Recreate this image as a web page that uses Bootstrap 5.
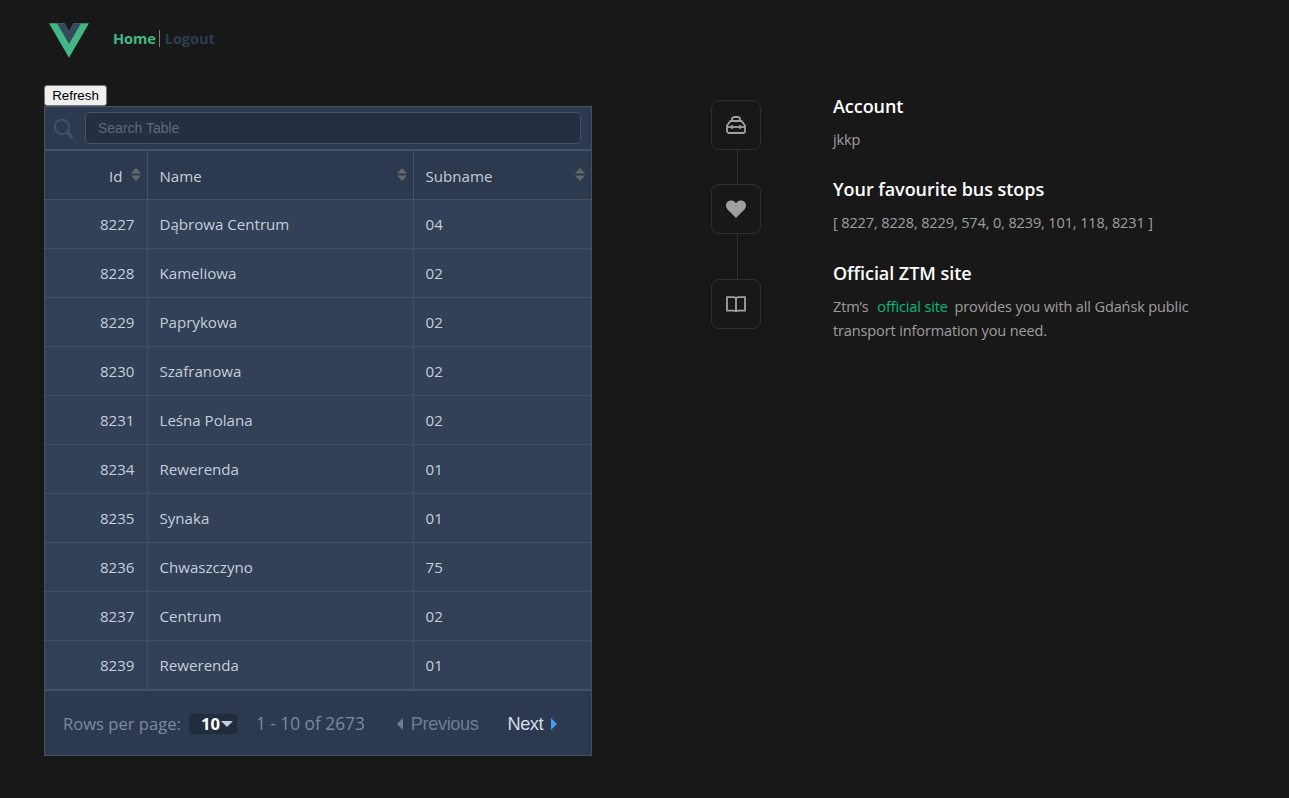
<!DOCTYPE html>
<html lang="en">
<head>
<meta charset="utf-8">
<title>Home</title>
<link rel="stylesheet" href="https://cdn.jsdelivr.net/npm/bootstrap@5.3.0/dist/css/bootstrap.min.css">
<style>
html,body{height:100%}
body{background:#181818;color:rgba(235,235,235,.64);font-family:"Open Sans","Noto Sans",sans-serif;font-size:14.5px;line-height:24px;overflow:hidden}
.app-shell{padding:0 44px;height:798px}
.left-pane{width:548px;flex:none}
.top-bar{height:85px;padding:23px 0 0 5px}
.top-nav{margin-left:24px;margin-top:5px;font-family:"Open Sans","Noto Sans",sans-serif;font-weight:700;font-size:14.6px;line-height:20px;letter-spacing:-.1px}
.top-nav a{text-decoration:none;padding:0 4px;display:inline-block;line-height:17px}
.top-nav .on{color:#42b883;padding-right:3px;padding-left:0}
.top-nav .off{color:#2c3e50;border-left:1.5px solid #6f8294;padding-left:5px}
.refresh-btn{display:block;font:13.33px/15px "Liberation Sans",Arial,sans-serif;height:21px;width:63px;padding:0;background:#efefef;border:1px solid #767676;border-radius:3px;color:#000}
.grid-box{border:1px solid #435169;background:#2c394f}
.search-row{height:44px;padding:5px 10px 0 8px;gap:10px;border-bottom:2px solid #435169;align-items:flex-start}
.search-field{flex:1;height:32px;background:#262e42;border:1px solid #435169;border-radius:4px;padding:0 12px;font-family:"Liberation Sans",Arial,sans-serif;font-size:14px;line-height:30px;color:#5b6a81}
.search-ico{margin-top:6px}
.stop-table{width:100%;margin:0;table-layout:fixed;border-collapse:collapse;font-size:15.1px}
.stop-table th,.stop-table td{height:49px;padding:1px 12px 0;vertical-align:middle;border:0;border-bottom:1px solid #435169;border-right:1px solid #435169;color:#c7ced8;background:#324058;box-shadow:none;font-weight:400;line-height:20px}
.stop-table th{height:48px;padding-top:2px;background:#2c394f;position:relative}
.stop-table th:last-child,.stop-table td:last-child{border-right:0}
.col-id{width:102px;text-align:right}
.col-name{width:266px}
.stop-table th.col-id{padding-right:24px}
.sorter{position:absolute;right:6px;top:17px;width:10px;height:13px}
.pager{height:66px;border-top:2px solid #435169;background:#2c394f;padding:2px 0 0 18px;font-size:16.6px;color:#7a8aa3;margin-top:-1px}
.pager-range{font-size:17.3px}
.per-page{background:#222c3f;border-radius:3px;height:20px;width:48px;margin:0 19px 0 8px;padding-left:12px;color:#fff;font-weight:700;line-height:20px;gap:1px}
.page-link-a{font-family:"Liberation Sans",Arial,sans-serif;font-size:18.2px;letter-spacing:-.4px;text-decoration:none}
.page-link-a.dim{color:#6f7d90;margin-left:32px}
.page-link-a.act{color:#d5dde8;margin-left:29px}
.rail{width:50px;margin:100px 72px 0 119px;flex:none}
.rail-box{width:50px;height:50px;border:1px solid #2f2f2f;border-radius:8px}
.rail-line{width:1px;background:#2f2f2f;margin-left:26px}
.info-pane{width:370px;margin-top:94px;flex:none}
.info-block h3{font-family:"Open Sans","Noto Sans",sans-serif;font-size:18px;font-weight:600;color:#fff;line-height:25px;margin:0 0 9px;letter-spacing:-.05px}
.info-block p{margin:0;font-size:14.5px;letter-spacing:-.12px}
.info-block a{color:#00bd7e;text-decoration:none;padding:0 3px;margin-left:2px}
.b1{height:83px}.b2{height:84px}
</style>
</head>
<body>
<div class="app-shell d-flex">
  <div class="left-pane">
    <div class="top-bar d-flex align-items-start">
      <svg width="40" height="35" viewBox="0 0 261.76 226.69"><path fill="#41b883" d="M161.096.001l-30.225 52.351L100.647.001H-.005l130.877 226.688L261.749.001z"/><path fill="#34495e" d="M161.096.001l-30.225 52.351L100.647.001H52.346l78.526 136.01L209.398.001z"/></svg>
      <nav class="top-nav"><a class="on" href="#">Home</a><a class="off" href="#">Logout</a></nav>
    </div>
    <button class="refresh-btn" type="button">Refresh</button>
    <div class="grid-box">
      <div class="search-row d-flex">
        <svg class="search-ico" width="22" height="22" viewBox="0 0 22 22" fill="none"><circle cx="9" cy="9" r="7.2" stroke="#435169" stroke-width="2"/><path d="M14.5 14.5l5 5" stroke="#435169" stroke-width="3.4"/></svg>
        <div class="search-field">Search Table</div>
      </div>
      <table class="table stop-table">
        <thead>
          <tr>
            <th class="col-id">Id<svg class="sorter" viewBox="0 0 10 13"><path fill="#666" d="M5 0l5 5.5H0zM5 13L0 7.5h10z"/></svg></th>
            <th class="col-name">Name<svg class="sorter" viewBox="0 0 10 13"><path fill="#666" d="M5 0l5 5.5H0zM5 13L0 7.5h10z"/></svg></th>
            <th>Subname<svg class="sorter" viewBox="0 0 10 13"><path fill="#666" d="M5 0l5 5.5H0zM5 13L0 7.5h10z"/></svg></th>
          </tr>
        </thead>
        <tbody>
          <tr><td class="col-id">8227</td><td>Dąbrowa Centrum</td><td>04</td></tr>
          <tr><td class="col-id">8228</td><td>Kameliowa</td><td>02</td></tr>
          <tr><td class="col-id">8229</td><td>Paprykowa</td><td>02</td></tr>
          <tr><td class="col-id">8230</td><td>Szafranowa</td><td>02</td></tr>
          <tr><td class="col-id">8231</td><td>Leśna Polana</td><td>02</td></tr>
          <tr><td class="col-id">8234</td><td>Rewerenda</td><td>01</td></tr>
          <tr><td class="col-id">8235</td><td>Synaka</td><td>01</td></tr>
          <tr><td class="col-id">8236</td><td>Chwaszczyno</td><td>75</td></tr>
          <tr><td class="col-id">8237</td><td>Centrum</td><td>02</td></tr>
          <tr><td class="col-id">8239</td><td>Rewerenda</td><td>01</td></tr>
        </tbody>
      </table>
      <div class="pager d-flex align-items-center">
        <span>Rows per page:</span>
        <span class="per-page d-flex align-items-center">10<svg width="12" height="6" viewBox="0 0 12 6"><path fill="#c7ced8" d="M0 0h12L6 6z"/></svg></span>
        <span class="pager-range">1 - 10 of 2673</span>
        <a class="page-link-a dim d-flex align-items-center gap-2" href="#"><svg width="6" height="12" viewBox="0 0 6 12"><path fill="#6f7d90" d="M6 0v12L0 6z"/></svg>Previous</a>
        <a class="page-link-a act d-flex align-items-center gap-2" href="#">Next<svg width="6" height="12" viewBox="0 0 6 12"><path fill="#409eff" d="M0 0v12l6-6z"/></svg></a>
      </div>
    </div>
  </div>
  <div class="rail">
    <div class="rail-box d-flex align-items-center justify-content-center">
      <svg width="20" height="18" viewBox="0 0 20 18" fill="none" stroke="#a0a0a0" stroke-width="1.8"><path d="M6 5.500V3.500C6 2 7 1 8.500 1h3C13 1 14 2 14 3.500v2"/><path d="M4.500 5h11l3.500 4.500V15a2 2 0 0 1-2 2H3a2 2 0 0 1-2-2V9.500z"/><path d="M1 11h18"/><path d="M6 9v4M14 9v4" stroke-width="1.600"/></svg>
    </div>
    <div class="rail-line" style="height:34px"></div>
    <div class="rail-box d-flex align-items-center justify-content-center">
      <svg width="20" height="18" viewBox="0 0 20 18"><path fill="#a0a0a0" d="M10 18L1.6 9.4C-.5 7.200-.5 3.900 1.400 1.900 3.400-.1 6.600-.1 8.600 1.800L10 3.200l1.400-1.400c2-1.900 5.200-1.900 7.200.1 1.900 2 1.900 5.300-.2 7.500z"/></svg>
    </div>
    <div class="rail-line" style="height:45px"></div>
    <div class="rail-box d-flex align-items-center justify-content-center">
      <svg width="20" height="17" viewBox="0 0 20 17" fill="none" stroke="#a0a0a0" stroke-width="1.800"><path d="M1 1.200h6.500c1.300 0 2.500.6 2.500 1.800 0-1.200 1.200-1.800 2.500-1.800H19v13.400h-6.500c-1.300 0-2.500.5-2.500 1.400 0-.9-1.200-1.400-2.500-1.400H1z"/><path d="M10 3v13"/></svg>
    </div>
  </div>
  <div class="info-pane">
    <div class="info-block b1"><h3>Account</h3><p>jkkp</p></div>
    <div class="info-block b2"><h3>Your favourite bus stops</h3><p>[ 8227, 8228, 8229, 574, 0, 8239, 101, 118, 8231 ]</p></div>
    <div class="info-block"><h3>Official ZTM site</h3><p>Ztm’s <a href="#">official site</a> provides you with all Gdańsk public transport information you need.</p></div>
  </div>
</div>
</body>
</html>
